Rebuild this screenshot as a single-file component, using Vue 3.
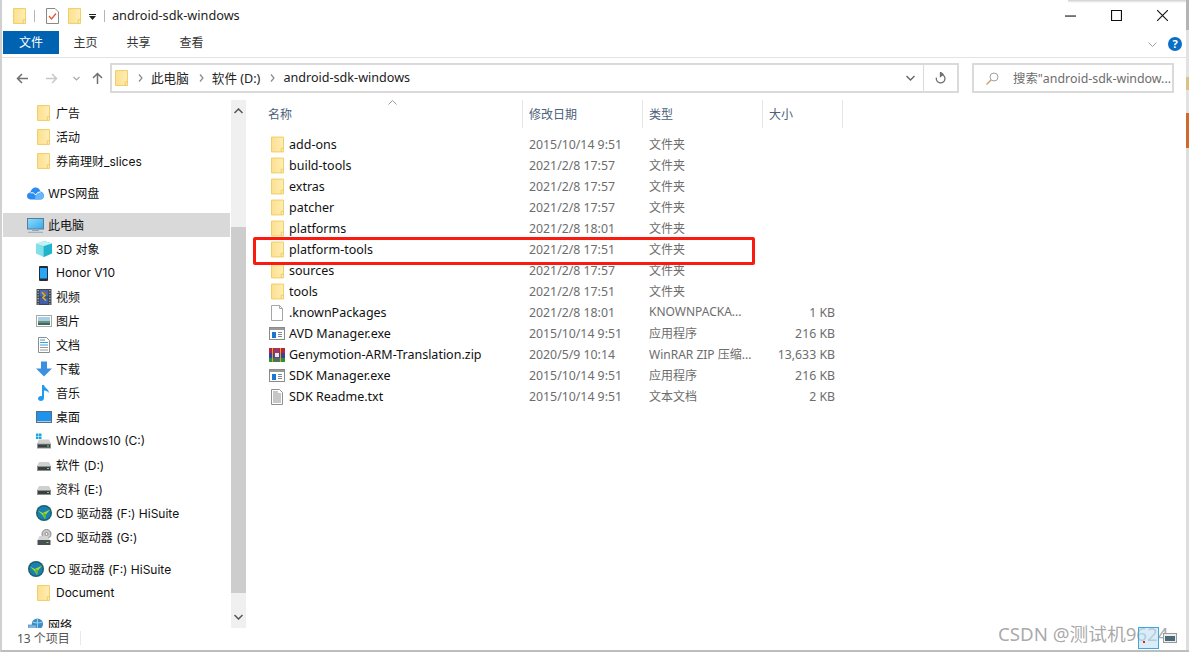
<script setup>
import { ref } from "vue";

const tabs = ref(["主页", "共享", "查看"]);
const crumbs = ref(["此电脑", "软件 (D:)", "android-sdk-windows"]);

const navGroups = ref([
  {
    cls: "",
    items: [
      { name: "广告", icon: "folder", deep: true },
      { name: "活动", icon: "folder", deep: true },
      { name: "券商理财_slices", icon: "folder", deep: true },
    ],
  },
  { cls: "gap", items: [{ name: "WPS网盘", icon: "cloud" }] },
  {
    cls: "gap",
    items: [
      { name: "此电脑", icon: "pc", active: true },
      { name: "3D 对象", icon: "cube", deep: true },
      { name: "Honor V10", icon: "phone", deep: true },
      { name: "视频", icon: "film", deep: true },
      { name: "图片", icon: "pic", deep: true },
      { name: "文档", icon: "doc", deep: true },
      { name: "下载", icon: "down", deep: true },
      { name: "音乐", icon: "music", deep: true },
      { name: "桌面", icon: "desk", deep: true },
      { name: "Windows10 (C:)", icon: "winDrive", deep: true },
      { name: "软件 (D:)", icon: "drive", deep: true },
      { name: "资料 (E:)", icon: "drive", deep: true },
      { name: "CD 驱动器 (F:) HiSuite", icon: "hisuite", deep: true },
      { name: "CD 驱动器 (G:)", icon: "cd", deep: true },
    ],
  },
  {
    cls: "gap",
    items: [
      { name: "CD 驱动器 (F:) HiSuite", icon: "hisuite" },
      { name: "Document", icon: "folder", deep: true },
    ],
  },
  { cls: "gap", items: [{ name: "网络", icon: "net" }] },
]);

const files = ref([
  { name: "add-ons", date: "2015/10/14 9:51", type: "文件夹", size: "", icon: "folder" },
  { name: "build-tools", date: "2021/2/8 17:57", type: "文件夹", size: "", icon: "folder" },
  { name: "extras", date: "2021/2/8 17:57", type: "文件夹", size: "", icon: "folder" },
  { name: "patcher", date: "2021/2/8 17:57", type: "文件夹", size: "", icon: "folder" },
  { name: "platforms", date: "2021/2/8 18:01", type: "文件夹", size: "", icon: "folder" },
  { name: "platform-tools", date: "2021/2/8 17:51", type: "文件夹", size: "", icon: "folder" },
  { name: "sources", date: "2021/2/8 17:57", type: "文件夹", size: "", icon: "folder" },
  { name: "tools", date: "2021/2/8 17:51", type: "文件夹", size: "", icon: "folder" },
  { name: ".knownPackages", date: "2021/2/8 18:01", type: "KNOWNPACKA...", size: "1 KB", icon: "blank" },
  { name: "AVD Manager.exe", date: "2015/10/14 9:51", type: "应用程序", size: "216 KB", icon: "exe" },
  { name: "Genymotion-ARM-Translation.zip", date: "2020/5/9 10:14", type: "WinRAR ZIP 压缩...", size: "13,633 KB", icon: "rar" },
  { name: "SDK Manager.exe", date: "2015/10/14 9:51", type: "应用程序", size: "216 KB", icon: "exe" },
  { name: "SDK Readme.txt", date: "2015/10/14 9:51", type: "文本文档", size: "2 KB", icon: "txt" },
]);
</script>

<template>
  <div class="win">
    <!-- 圖示定義 -->
    <svg class="defs" width="0" height="0">
      <defs>
        <linearGradient id="folderFill" x1="0" y1="0" x2="1" y2="0">
          <stop offset="0" stop-color="#fbe08e" />
          <stop offset="1" stop-color="#ffedb6" />
        </linearGradient>
        <linearGradient id="screenFill" x1="0" y1="0" x2="1" y2="1">
          <stop offset="0" stop-color="#8fdcfb" />
          <stop offset="1" stop-color="#33aaf0" />
        </linearGradient>
      </defs>
      <symbol id="folder" viewBox="0 0 14 17">
        <path d="M.5.5h13v16H.5z" fill="url(#folderFill)" stroke="#eecb5c" />
        <path d="M11 16.500v-4h2.500" fill="none" stroke="#eecb5c" />
      </symbol>
      <symbol id="cloud" viewBox="0 0 17 13">
        <path d="M4 12.500C1.500 12.500 0 11 0 9c0-2 1.500-3.400 3.200-3.500C4 2.500 6 .5 8.500.5c2.400 0 4.300 1.600 4.900 4C15.500 5 17 6.800 17 8.800c0 2.200-1.600 3.700-3.700 3.700z" fill="#2b8bf0" />
        <path d="M8.500 8c1-2 3-3.200 5-3 2 .5 3.500 2 3.500 3.800 0 2.200-1.600 3.700-3.700 3.700H8z" fill="#66b6f8" />
        <path d="M3.500 6c2-.8 4 0 5 2" fill="none" stroke="#fff" />
        <path d="M8.500 8c1-2 3-3.200 5-3" fill="none" stroke="#fff" />
      </symbol>
      <symbol id="pc" viewBox="0 0 17 15">
        <rect x=".5" y=".5" width="16" height="10.500" fill="url(#screenFill)" stroke="#5c7c96" />
        <path d="M5 12.500h7" stroke="#8fa6ba" />
        <path d="M1 14.300h15" stroke="#94a8bc" />
      </symbol>
      <symbol id="cube" viewBox="0 0 16 16">
        <path d="M8 0l8 2.500v10L8 16z" fill="#1fb4cc" />
        <path d="M8 0L0 2.500v10L8 16z" fill="#7fe0ea" />
        <path d="M0 2.500L8 5l8-2.500L8 0z" fill="#c5f1f5" />
        <path d="M8 5v11" stroke="#30a9c0" stroke-width=".7" />
      </symbol>
      <symbol id="phone" viewBox="0 0 9 15">
        <rect width="9" height="15" rx="1" fill="#222c36" />
        <rect x="1" y="2" width="7" height="10.500" fill="#2aa6f8" />
      </symbol>
      <symbol id="film" viewBox="0 0 14 15">
        <rect width="14" height="15" fill="#40464e" />
        <rect x="3" y="1" width="8" height="6" fill="#3f6fb8" />
        <rect x="3" y="8" width="8" height="6" fill="#3f5fb0" />
        <path d="M5 3l3 3-2 2 3 3" stroke="#d6b21c" stroke-width="1.500" fill="none" />
        <path d="M7 2l2 3" stroke="#d64a3c" stroke-width="1.200" />
        <path d="M1 1.500h1M1 4h1M1 6.500h1M1 9h1M1 11.500h1M1 14h1M12 1.500h1M12 4h1M12 6.500h1M12 9h1M12 11.500h1M12 14h1" stroke="#e8e8e8" />
      </symbol>
      <symbol id="pic" viewBox="0 0 16 12">
        <rect x=".5" y=".5" width="15" height="11" fill="#fff" stroke="#a8a8a8" />
        <rect x="2" y="2" width="12" height="4" fill="#a6cfe8" />
        <rect x="2" y="6" width="12" height="2" fill="#6d8f80" />
        <rect x="2" y="8" width="12" height="2" fill="#3e6a5a" />
      </symbol>
      <symbol id="doc" viewBox="0 0 12 16">
        <path d="M.5.500h8l3 3v12H.5z" fill="#fff" stroke="#8d8d8d" />
        <path d="M2 3h5M2 5.500h8M2 8h8" stroke="#39a0d8" />
        <path d="M2 10.500h8M2 13h8" stroke="#9a9a9a" />
      </symbol>
      <symbol id="down" viewBox="0 0 16 15">
        <path d="M5 0h6v7h5l-8 8-8-8h5z" fill="#3d8fe0" />
      </symbol>
      <symbol id="music" viewBox="0 0 12 16">
        <path d="M4 0h2c.5 3 5 4 5 8-1-1.500-3-2.500-5-2.500V13c0 2-1.500 3-3.200 3C1.300 16 0 15 0 13.500 0 12 1.500 11 3 11c.4 0 .7 0 1 .1z" fill="#1e9cf0" />
      </symbol>
      <symbol id="desk" viewBox="0 0 16 12">
        <rect width="16" height="12" fill="#5b6c7e" />
        <rect x="1" y="1" width="14" height="9.500" fill="#1f93ec" />
        <path d="M1 10.500h14" stroke="#fff" stroke-width=".6" />
      </symbol>
      <symbol id="drive" viewBox="0 0 14 9">
        <path d="M2 0h10l2 4H0z" fill="#d0d0d0" />
        <rect y="4" width="14" height="5" fill="#8c9092" />
        <rect x="1" y="5" width="12" height="3" fill="#3a3f42" />
        <rect x="10" y="6" width="2" height="1" fill="#6be05c" />
      </symbol>
      <symbol id="winDrive" viewBox="0 0 16 15">
        <path d="M0 0h2.500v2.500H0zM3 0h2.500v2.500H3zM0 3h2.500v2.500H0zM3 3h2.500v2.500H3z" fill="#19a7e0" />
        <path d="M3 6h10l2 4H1z" fill="#d0d0d0" />
        <rect x="1" y="10" width="14" height="5" fill="#8c9092" />
        <rect x="2" y="11" width="12" height="3" fill="#3a3f42" />
        <rect x="11" y="12" width="2" height="1" fill="#6be05c" />
      </symbol>
      <symbol id="hisuite" viewBox="0 0 16 16">
        <circle cx="8" cy="8" r="8" fill="#17626a" />
        <circle cx="8" cy="8" r="6.600" fill="#1b7fb4" />
        <path d="M1.800 5.500l5 2.500 7.500-3.500-4 4.500L9 14 6.500 10z" fill="#a5dc2f" />
        <path d="M6.800 8L9 14l1.300-5z" fill="#4fb83a" />
      </symbol>
      <symbol id="cd" viewBox="0 0 15 16">
        <circle cx="10" cy="5" r="4.500" fill="#c9c9c9" stroke="#8a8a8a" />
        <circle cx="10" cy="5" r="1.500" fill="#fff" stroke="#8a8a8a" />
        <path d="M3 7h8l2 4H1z" fill="#d4d4d4" />
        <rect x="1" y="11" width="13" height="5" fill="#4a4f52" />
        <rect x="10" y="13" width="2" height="1" fill="#6be05c" />
      </symbol>
      <symbol id="net" viewBox="0 0 17 14">
        <circle cx="10" cy="6" r="6" fill="#3d8fc8" />
        <path d="M5 4c3 1 7 1 10 0M10 0v12" stroke="#a8d6f0" fill="none" />
        <rect y="7" width="9" height="6" fill="#79b8e6" stroke="#4f7fa8" stroke-width=".7" />
      </symbol>
      <symbol id="blank" viewBox="0 0 12 16">
        <path d="M.5.500h8l3 3v12H.5z" fill="#fff" stroke="#a6a6a6" />
        <path d="M8.500.500v3h3" fill="none" stroke="#a6a6a6" />
      </symbol>
      <symbol id="txt" viewBox="0 0 12 16">
        <path d="M.5.500h8l3 3v12H.5z" fill="#fff" stroke="#8f8f8f" />
        <path d="M2 3h5M2 5h8M2 7h8M2 9h8M2 11h8M2 13h8" stroke="#8f8f8f" />
      </symbol>
      <symbol id="exe" viewBox="0 0 16 13">
        <rect x=".5" y=".5" width="15" height="12" fill="#fff" stroke="#8b8b8b" />
        <rect x="1" y="1" width="14" height="2" fill="#9a9a9a" />
        <rect x="3" y="5" width="4" height="6" fill="#1976d2" />
        <path d="M9 5.500h4M9 7.500h4M9 9.500h4" stroke="#7c8a96" />
      </symbol>
      <symbol id="rar" viewBox="0 0 16 14">
        <rect width="16" height="5" fill="#b8263c" />
        <rect y="5" width="16" height="5" fill="#3b3f9e" />
        <rect y="10" width="16" height="4" fill="#2e8f3a" />
        <rect x="5" width="5" height="14" fill="#7c4a92" opacity=".55" />
        <rect x="6" y="5" width="4" height="4" fill="#f2ead2" />
        <rect x="3" y="0" width="1" height="14" fill="#d9a52a" />
        <rect x="11" y="0" width="1" height="14" fill="#d9a52a" />
      </symbol>
    </svg>

    <header class="titlebar">
      <svg class="ico-title"><use href="#folder" /></svg>
      <span class="bar"></span>
      <svg class="ico-check" viewBox="0 0 13 16">
        <path d="M.5.500h8.500l3.500 3.500v11.500H.5z" fill="#fff" stroke="#888" />
        <path d="M3 8l2.500 3L10 5.500" fill="none" stroke="#e2592c" stroke-width="1.300" />
      </svg>
      <svg class="ico-title second"><use href="#folder" /></svg>
      <svg class="qa" viewBox="0 0 7 6"><path d="M0 0h7v1H0zM0 2h7L3.500 6z" fill="#222" /></svg>
      <span class="bar last"></span>
      <span class="title">android-sdk-windows</span>
      <div class="caption">
        <svg viewBox="0 0 10 10"><path d="M0 5.500h10" stroke="#111" /></svg>
        <svg viewBox="0 0 10 10"><path d="M.5.500h9v9h-9z" fill="none" stroke="#111" /></svg>
        <svg viewBox="0 0 10 10"><path d="M0 0l10 10M10 0L0 10" stroke="#111" /></svg>
      </div>
    </header>

    <nav class="ribbon">
      <span class="file-tab">文件</span>
      <span v-for="t in tabs" :key="t" class="tab">{{ t }}</span>
      <svg class="ribbon-arrow" viewBox="0 0 9 5"><path d="M.5.500l4 4 4-4" fill="none" stroke="#a0a0a0" /></svg>
      <span class="help">?</span>
    </nav>

    <div class="toolbar">
      <div class="nav-btns">
        <svg class="arrow" viewBox="0 0 12 11"><path d="M12 5.500H1.500M6 1L1.500 5.500 6 10" fill="none" stroke="#6f6f6f" stroke-width="1.500" /></svg>
        <svg class="arrow" viewBox="0 0 12 11"><path d="M0 5.500h10.500M6 1l4.500 4.500L6 10" fill="none" stroke="#c8c8c8" stroke-width="1.500" /></svg>
        <svg class="mini" viewBox="0 0 7 5"><path d="M.5 1l3 3 3-3" fill="none" stroke="#a8a8a8" stroke-width="1.200" /></svg>
        <svg class="arrow up" viewBox="0 0 11 12"><path d="M5.500 12V1.500M1 6l4.500-4.500L10 6" fill="none" stroke="#6f6f6f" stroke-width="1.500" /></svg>
      </div>
      <div class="address">
        <svg class="ico-addr"><use href="#folder" /></svg>
        <template v-for="c in crumbs" :key="c">
          <svg class="chev" viewBox="0 0 5 8"><path d="M1 .500L4 4 1 7.500" fill="none" stroke="#8a8a8a" stroke-width="1.200" /></svg>
          <span class="crumb">{{ c }}</span>
        </template>
        <svg class="addr-down" viewBox="0 0 9 6"><path d="M.5 1l4 4 4-4" fill="none" stroke="#666" stroke-width="1.400" /></svg>
        <span class="refresh">
          <svg viewBox="0 0 12 13"><path d="M6 2.500A4.700 4.700 0 1 1 1.600 6M6 .3v4.400L8.800 2.500z" fill="none" stroke="#6e6e6e" stroke-width="1.400" /></svg>
        </span>
      </div>
      <div class="search">
        <svg viewBox="0 0 13 13"><circle cx="8" cy="5" r="4" fill="none" stroke="#a0a0a0" /><path d="M5 8l-4.500 4.500" stroke="#c69a6c" stroke-width="1.200" /></svg>
        <span>搜索"android-sdk-window...</span>
      </div>
    </div>

    <div class="main">
      <aside class="side">
        <div v-for="(g, i) in navGroups" :key="i" class="group" :class="g.cls">
          <div v-for="it in g.items" :key="it.name" class="nav-item" :class="{ active: it.active, deep: it.deep }">
            <span class="nav-icon"><svg :class="'i-' + it.icon"><use :href="'#' + it.icon" /></svg></span>
            <span class="nav-text">{{ it.name }}</span>
          </div>
        </div>
      </aside>

      <div class="scroll">
        <svg class="sc-arrow" viewBox="0 0 9 6"><path d="M.5 5l4-4 4 4" fill="none" stroke="#555" stroke-width="1.500" /></svg>
        <div class="track"><div class="thumb"></div></div>
        <svg class="sc-arrow" viewBox="0 0 9 6"><path d="M.5 1l4 4 4-4" fill="none" stroke="#555" stroke-width="1.500" /></svg>
      </div>

      <section class="list">
        <svg class="sort" viewBox="0 0 9 5"><path d="M.5 4.500l4-4 4 4" fill="none" stroke="#9a9a9a" /></svg>
        <div class="head">
          <span>名称</span>
          <span>修改日期</span>
          <span>类型</span>
          <span>大小</span>
        </div>
        <div class="rows">
          <div v-for="f in files" :key="f.name" class="row">
            <span class="fname">
              <span class="file-icon"><svg :class="'f-' + f.icon"><use :href="'#' + f.icon" /></svg></span>
              {{ f.name }}
            </span>
            <span class="meta num">{{ f.date }}</span>
            <span class="meta kind">{{ f.type }}</span>
            <span class="meta num size">{{ f.size }}</span>
          </div>
        </div>
        <!-- 紅框標註 -->
        <div class="mark"></div>
      </section>
    </div>

    <footer class="status">
      <span>13 个项目</span>
      <i></i>
    </footer>

    <div class="watermark">CSDN @测试机9624</div>
    <div class="tray"><b></b></div>
    <svg class="tray-pic" viewBox="0 0 14 10">
      <rect x=".5" y=".5" width="13" height="9" fill="#eee" stroke="#999" />
      <rect x="2" y="3" width="10" height="5" fill="#4a6a7a" />
    </svg>
    <!-- 後面其他視窗露出來的邊 -->
    <div class="top-shadow"></div>
    <div class="behind"></div>
  </div>
</template>

<style scoped>
.win {
  position: relative;
  width: 1189px;
  height: 652px;
  box-sizing: border-box;
  background: #fff;
  border-left: 2px solid #d0d0d0;
  border-bottom: 2px solid #bdbdbd;
  padding-right: 3px;
  display: flex;
  flex-direction: column;
  overflow: hidden;
  color: #1a1a1a;
  font-family: "Noto Sans", "Noto Sans CJK SC", sans-serif;
  font-size: 12px;
}

.defs {
  position: absolute;
}

.titlebar {
  height: 31px;
  flex: none;
  display: flex;
  align-items: center;
  padding-left: 11px;
}

.ico-title {
  width: 13px;
  height: 16px;
}

.ico-title.second {
  margin-left: 9px;
}

.bar {
  width: 1px;
  height: 12px;
  background: #b5b5b5;
  margin-left: 8px;
}

.ico-check {
  width: 13px;
  height: 16px;
  margin-left: 11px;
}

.qa {
  width: 7px;
  height: 6px;
  margin-left: 8px;
  margin-top: 3px;
}

.title {
  margin: 0 0 2px 7px;
  color: #222;
  font-size: 12.700px;
}

.caption {
  margin-left: auto;
  display: flex;
  gap: 35px;
  padding-right: 18px;
}

.caption svg {
  width: 11px;
  height: 11px;
}

.ribbon {
  height: 26px;
  flex: none;
  display: flex;
  align-items: flex-start;
  border-bottom: 1px solid #e3e3e3;
  padding-left: 1px;
}

.file-tab {
  width: 56px;
  height: 23px;
  background: #0063b1;
  color: #fff;
  text-align: center;
  line-height: 24px;
}

.tab {
  width: 53px;
  line-height: 24px;
  text-align: center;
  color: #333;
}

.ribbon-arrow {
  width: 9px;
  height: 5px;
  margin: 11px 0 0 auto;
}

.help {
  width: 14px;
  height: 14px;
  margin: 6px 4px 0 11px;
  border-radius: 50%;
  background: #0a6fc4;
  color: #fff;
  font-size: 11px;
  font-weight: 700;
  line-height: 14px;
  text-align: center;
}

.toolbar {
  flex: none;
  height: 30px;
  margin-top: 5px;
  display: flex;
  align-items: stretch;
}

.nav-btns {
  width: 108px;
  flex: none;
  display: flex;
  align-items: center;
  padding-left: 14px;
  box-sizing: border-box;
}

.arrow {
  width: 12px;
  height: 11px;
  margin-right: 18px;
}

.mini {
  width: 7px;
  height: 5px;
  margin: 1px 12px 0 -3px;
}

.arrow.up {
  width: 11px;
  height: 12px;
  margin-right: 0;
}

.address {
  width: 849px;
  box-sizing: border-box;
  border: 2px solid #dadada;
  display: flex;
  align-items: center;
  padding-left: 3px;
}

.ico-addr {
  width: 13px;
  height: 16px;
  margin-right: 4px;
}

.chev {
  width: 5px;
  height: 8px;
  margin: 0 8px 0 6px;
}

.crumb {
  color: #222;
  margin: 0 4px 2px 0;
  font-size: 12.600px;
}

.addr-down {
  width: 9px;
  height: 6px;
  margin-left: auto;
  margin-right: 8px;
}

.refresh {
  width: 33px;
  height: 100%;
  flex: none;
  border-left: 1px solid #dadada;
  display: flex;
  align-items: center;
  justify-content: center;
}

.refresh svg {
  width: 11px;
  height: 12px;
}

.search {
  width: 202px;
  margin-left: 13px;
  box-sizing: border-box;
  border: 2px solid #dadada;
  display: flex;
  align-items: center;
  padding-left: 12px;
  color: #6d6d6d;
  font-size: 12.400px;
  white-space: nowrap;
}

.search svg {
  width: 13px;
  height: 13px;
  margin-right: 14px;
  flex: none;
}

.main {
  flex: 1;
  min-height: 0;
  display: flex;
  margin-top: 7px;
}

.side {
  width: 227px;
  flex: none;
  margin-left: 1px;
  padding-top: 1px;
  overflow: hidden;
  color: #111;
  font-family: Inter, "Noto Sans CJK SC", sans-serif;
}

.group.gap {
  margin-top: 8px;
}

.nav-item {
  height: 24px;
  display: flex;
  align-items: center;
  padding-left: 24px;
  white-space: nowrap;
}

.nav-item.deep {
  padding-left: 32px;
}

.nav-item.active {
  background: #d9d9d9;
}

.nav-text {
  margin-bottom: 2px;
}

.nav-icon {
  width: 17px;
  margin-right: 4px;
  display: flex;
  justify-content: center;
  flex: none;
}

.nav-icon svg {
  width: 16px;
  height: 16px;
}

.nav-icon svg.i-folder {
  width: 13px;
  height: 16px;
}

.nav-icon svg.i-cloud {
  width: 17px;
  height: 13px;
}

.nav-icon svg.i-pc {
  width: 17px;
  height: 15px;
}

.nav-icon svg.i-phone {
  width: 9px;
  height: 15px;
}

.nav-icon svg.i-drive {
  width: 14px;
  height: 9px;
  margin-top: 3px;
}

.nav-icon svg.i-pic,
.nav-icon svg.i-desk {
  width: 16px;
  height: 12px;
}

.nav-icon svg.i-doc,
.nav-icon svg.i-music {
  width: 12px;
  height: 16px;
}

.scroll {
  width: 15px;
  flex: none;
  margin-left: 1px;
  display: flex;
  flex-direction: column;
  align-items: center;
  background: #f0f0f0;
}

.sc-arrow {
  width: 9px;
  height: 6px;
  margin: 8px 0;
  flex: none;
}

.track {
  flex: 1;
  width: 100%;
  padding-top: 105px;
  padding-bottom: 13px;
  box-sizing: border-box;
  display: flex;
}

.thumb {
  flex: 1;
  background: #cdcdcd;
}

.list {
  position: relative;
  flex: 1;
  padding-left: 7px;
}

.sort {
  position: absolute;
  left: 142px;
  top: 0;
  width: 9px;
  height: 5px;
}

.head {
  display: grid;
  grid-template-columns: 270px 120px 120px 80px;
  width: 590px;
  height: 28px;
  color: #4c607a;
}

.head span {
  display: flex;
  align-items: center;
  padding-left: 6px;
  border-right: 1px solid #e5e5e5;
  box-sizing: border-box;
}

.head span:first-child {
  padding-left: 15px;
}

.rows {
  margin-top: 6px;
}

.row {
  display: grid;
  grid-template-columns: 270px 120px 120px 80px;
  width: 590px;
  height: 21px;
  align-items: center;
  white-space: nowrap;
}

.fname {
  display: flex;
  align-items: center;
  color: #111;
  font-size: 12.500px;
  padding-left: 18px;
}

.file-icon {
  width: 13px;
  margin-right: 5px;
  display: flex;
  justify-content: flex-start;
  flex: none;
}

.file-icon svg {
  width: 13px;
  height: 17px;
  flex: none;
}

.file-icon svg.f-exe {
  width: 16px;
  height: 13px;
  margin-left: -2px;
}

.file-icon svg.f-rar {
  width: 16px;
  height: 14px;
  margin-left: -2px;
}

.file-icon svg.f-blank,
.file-icon svg.f-txt {
  width: 12px;
  height: 16px;
}

.meta {
  color: #6d6d6d;
  padding-left: 6px;
}

.meta.kind {
  margin-bottom: 2px;
}

.meta.num {
  font-size: 12.300px;
}

.meta.size {
  padding: 0 8px 0 0;
  text-align: right;
}

.mark {
  position: absolute;
  left: 7px;
  top: 137px;
  width: 502px;
  height: 28px;
  box-sizing: border-box;
  border: 3px solid #fb1a10;
  border-radius: 2px;
}

.status {
  height: 22px;
  flex: none;
  box-sizing: border-box;
  padding: 0 0 2px 15px;
  display: flex;
  align-items: center;
  color: #555;
}

.status i {
  width: 1px;
  height: 14px;
  margin-left: 10px;
  background: #e8e8e8;
}

.watermark {
  position: absolute;
  left: 996px;
  top: 619px;
  font-size: 18.700px;
  color: rgba(120, 120, 120, 0.65);
  white-space: nowrap;
}

.tray {
  position: absolute;
  left: 1136px;
  top: 627px;
  width: 21px;
  height: 22px;
  box-sizing: border-box;
  border: 1px solid #3fa6dc;
  background: rgba(190, 225, 245, 0.6);
}

.tray b {
  display: block;
  width: 2px;
  height: 2px;
  margin: 13px 0 0 4px;
  background: #d22;
}

.tray-pic {
  position: absolute;
  left: 1161px;
  top: 633px;
  width: 14px;
  height: 10px;
}

.top-shadow {
  position: absolute;
  left: 1066px;
  top: 0;
  width: 118px;
  height: 3px;
  background: linear-gradient(#cfcfcf, #fff);
}

.behind {
  position: absolute;
  right: 0;
  top: 0;
  width: 3px;
  height: 100%;
  background: linear-gradient(
    #b4b4b4 0 30px,
    #e2e2e2 30px 77px,
    #dcc184 77px 90px,
    #e2e2e2 90px 113px,
    #cf6a2c 113px 148px,
    #dedede 148px
  );
}
</style>
